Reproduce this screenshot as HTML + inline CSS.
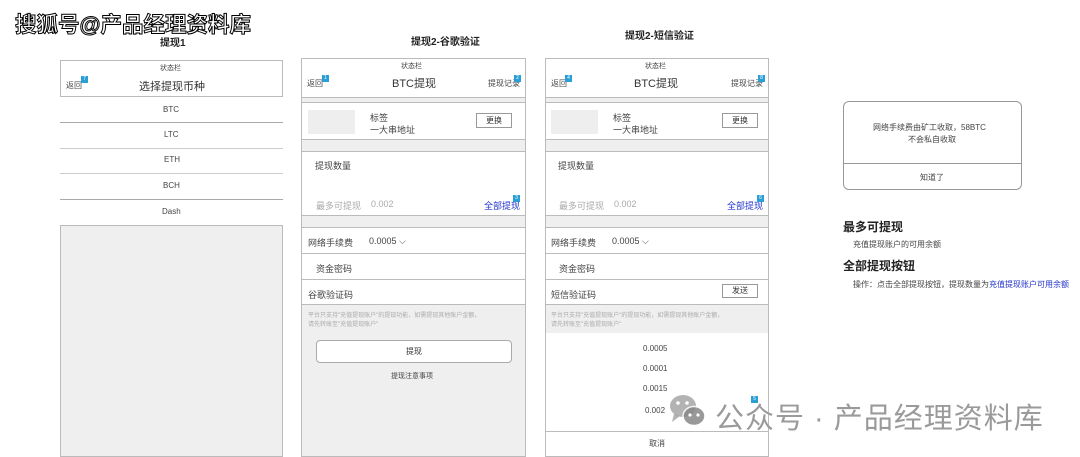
<!DOCTYPE html>
<html><head><meta charset="utf-8"><style>
*{margin:0;padding:0;box-sizing:border-box}
body{width:1080px;height:457px;background:#fff;position:relative;overflow:hidden;font-family:"Liberation Sans","Noto Sans CJK SC",sans-serif;color:#333}
.a{position:absolute}
.t{font-size:9px;color:#444;white-space:nowrap}
.g{background:#efefef}
.bd{border:1px solid #bbb}
.hl{position:absolute;height:1px;background:#aaa}
.bdg{position:absolute;width:7px;height:7px;background:#2a9fd6;color:#fff;font-size:5px;line-height:7px;text-align:center}
.ttl{position:absolute;font-size:10px;font-weight:bold;color:#222;white-space:nowrap}
</style></head><body>

<div class="a" style="left:15px;top:8px;font-size:21.5px;font-weight:bold;color:#fff;-webkit-text-stroke:1px #000;white-space:nowrap">搜狐号@产品经理资料库</div>

<div class="ttl" style="left:160px;top:34px">提现1</div>
<div class="ttl" style="left:411px;top:33px">提现2-谷歌验证</div>
<div class="ttl" style="left:625px;top:27px">提现2-短信验证</div>

<!-- Panel 1 -->
<div class="a bd" style="left:60px;top:60px;width:223px;height:37px"></div>
<div class="a t" style="left:160px;top:63px;font-size:7px">状态栏</div>
<div class="a t" style="left:66px;top:80px;font-size:8px">返回</div>
<div class="bdg" style="left:81px;top:76px">7</div>
<div class="a t" style="left:139px;top:78px;font-size:11px;color:#333">选择提现币种</div>
<div class="a t" style="left:163px;top:105px;font-size:8px">BTC</div>
<div class="hl" style="left:60px;top:122px;width:223px"></div>
<div class="a t" style="left:164px;top:130px;font-size:8px">LTC</div>
<div class="hl" style="left:60px;top:148px;width:223px;background:#ccc"></div>
<div class="a t" style="left:164px;top:155px;font-size:8px">ETH</div>
<div class="hl" style="left:60px;top:173px;width:223px;background:#ccc"></div>
<div class="a t" style="left:163px;top:181px;font-size:8px">BCH</div>
<div class="hl" style="left:60px;top:199px;width:223px"></div>
<div class="a t" style="left:162px;top:207px;font-size:8px">Dash</div>
<div class="a bd g" style="left:60px;top:225px;width:223px;height:232px"></div>

<!-- Panel 2 -->
<div class="a bd" style="left:301px;top:58px;width:225px;height:399px;background:#fff"></div>
<div class="a t" style="left:401px;top:61px;font-size:7px">状态栏</div>
<div class="a t" style="left:307px;top:78px;font-size:8px">返回</div>
<div class="bdg" style="left:322px;top:75px">1</div>
<div class="a t" style="left:392px;top:75px;font-size:11px;color:#333">BTC提现</div>
<div class="a t" style="left:488px;top:78px;font-size:8px">提现记录</div>
<div class="bdg" style="left:514px;top:75px">2</div>
<div class="a g" style="left:302px;top:97px;width:223px;height:6px;border-top:1px solid #bbb;border-bottom:1px solid #bbb"></div>
<div class="a" style="left:308px;top:110px;width:47px;height:24px;background:#eee"></div>
<div class="a t" style="left:370px;top:111px">标签</div>
<div class="a t" style="left:370px;top:123px">一大串地址</div>
<div class="a" style="left:476px;top:113px;width:36px;height:15px;border:1px solid #999;font-size:8px;text-align:center;line-height:13px">更换</div>
<div class="a g" style="left:302px;top:139px;width:223px;height:13px;border-top:1px solid #bbb;border-bottom:1px solid #bbb"></div>
<div class="a t" style="left:315px;top:159px">提现数量</div>
<div class="a t" style="left:316px;top:199px;color:#aaa">最多可提现</div>
<div class="a t" style="left:371px;top:199px;color:#aaa">0.002</div>
<div class="a t" style="left:484px;top:199px;color:#2233cc">全部提现</div>
<div class="bdg" style="left:513px;top:195px">3</div>
<div class="a g" style="left:302px;top:215px;width:223px;height:13px;border-top:1px solid #bbb;border-bottom:1px solid #bbb"></div>
<div class="a t" style="left:308px;top:236px">网络手续费</div>
<div class="a t" style="left:369px;top:236px">0.0005 ⌵</div>
<div class="hl" style="left:302px;top:253px;width:223px;background:#bbb"></div>
<div class="a t" style="left:316px;top:262px">资金密码</div>
<div class="hl" style="left:302px;top:279px;width:223px;background:#bbb"></div>
<div class="a t" style="left:308px;top:288px">谷歌验证码</div>
<div class="a g" style="left:302px;top:304px;width:223px;height:152px;border-top:1px solid #bbb"></div>
<div class="a t" style="left:308px;top:312px;font-size:6px;color:#aaa;line-height:9px">平台只支持"充值提现账户"的提现功能，如需提现其他账户金额，<br>请先转账至"充值提现账户"</div>
<div class="a" style="left:316px;top:340px;width:196px;height:23px;background:#fff;border:1px solid #aaa;border-radius:4px;font-size:8px;text-align:center;line-height:21px">提现</div>
<div class="a t" style="left:391px;top:371px;font-size:7px">提现注意事项</div>

<!-- Panel 3 -->
<div class="a bd" style="left:545px;top:58px;width:224px;height:399px;background:#fff"></div>
<div class="a t" style="left:645px;top:61px;font-size:7px">状态栏</div>
<div class="a t" style="left:551px;top:78px;font-size:8px">返回</div>
<div class="bdg" style="left:565px;top:75px">4</div>
<div class="a t" style="left:634px;top:75px;font-size:11px;color:#333">BTC提现</div>
<div class="a t" style="left:731px;top:78px;font-size:8px">提现记录</div>
<div class="bdg" style="left:758px;top:75px">8</div>
<div class="a g" style="left:546px;top:97px;width:222px;height:6px;border-top:1px solid #bbb;border-bottom:1px solid #bbb"></div>
<div class="a" style="left:551px;top:110px;width:47px;height:24px;background:#eee"></div>
<div class="a t" style="left:613px;top:111px">标签</div>
<div class="a t" style="left:613px;top:123px">一大串地址</div>
<div class="a" style="left:722px;top:113px;width:36px;height:15px;border:1px solid #999;font-size:8px;text-align:center;line-height:13px">更换</div>
<div class="a g" style="left:546px;top:139px;width:222px;height:13px;border-top:1px solid #bbb;border-bottom:1px solid #bbb"></div>
<div class="a t" style="left:558px;top:159px">提现数量</div>
<div class="a t" style="left:559px;top:199px;color:#aaa">最多可提现</div>
<div class="a t" style="left:614px;top:199px;color:#aaa">0.002</div>
<div class="a t" style="left:727px;top:199px;color:#2233cc">全部提现</div>
<div class="bdg" style="left:757px;top:195px">6</div>
<div class="a g" style="left:546px;top:215px;width:222px;height:13px;border-top:1px solid #bbb;border-bottom:1px solid #bbb"></div>
<div class="a t" style="left:551px;top:236px">网络手续费</div>
<div class="a t" style="left:612px;top:236px">0.0005 ⌵</div>
<div class="hl" style="left:546px;top:253px;width:222px;background:#bbb"></div>
<div class="a t" style="left:559px;top:262px">资金密码</div>
<div class="hl" style="left:546px;top:279px;width:222px;background:#bbb"></div>
<div class="a t" style="left:551px;top:288px">短信验证码</div>
<div class="a" style="left:722px;top:284px;width:36px;height:14px;border:1px solid #999;font-size:8px;text-align:center;line-height:12px">发送</div>
<div class="a g" style="left:546px;top:304px;width:222px;height:29px;border-top:1px solid #bbb"></div>
<div class="a t" style="left:551px;top:312px;font-size:6px;color:#aaa;line-height:9px">平台只支持"充值提现账户"的提现功能，如需提现其他账户金额，<br>请先转账至"充值提现账户"</div>
<div class="a t" style="left:643px;top:344px;font-size:8px">0.0005</div>
<div class="a t" style="left:643px;top:364px;font-size:8px">0.0001</div>
<div class="a t" style="left:643px;top:384px;font-size:8px">0.0015</div>
<div class="a t" style="left:645px;top:406px;font-size:8px">0.002</div>
<div class="bdg" style="left:751px;top:396px">5</div>
<div class="hl" style="left:546px;top:431px;width:222px;background:#bbb"></div>
<div class="a t" style="left:649px;top:438px;font-size:8px">取消</div>

<!-- dialog -->
<div class="a" style="left:843px;top:101px;width:179px;height:89px;border:1px solid #999;border-radius:6px"></div>
<div class="a t" style="left:873px;top:122px;font-size:8px">网络手续费由矿工收取，58BTC</div>
<div class="a t" style="left:908px;top:134px;font-size:8px">不会私自收取</div>
<div class="hl" style="left:843px;top:163px;width:179px;background:#999"></div>
<div class="a t" style="left:920px;top:172px;font-size:8px">知道了</div>

<div class="a" style="left:843px;top:218px;font-size:12px;font-weight:bold;color:#222;white-space:nowrap">最多可提现</div>
<div class="a t" style="left:853px;top:239px;font-size:8px">充值提现账户的可用余额</div>
<div class="a" style="left:843px;top:257px;font-size:12px;font-weight:bold;color:#222;white-space:nowrap">全部提现按钮</div>
<div class="a t" style="left:853px;top:279px;font-size:8px">操作：点击全部提现按钮，提现数量为<span style="color:#2233cc">充值提现账户可用余额</span></div>

<svg class="a" style="left:668px;top:392px" width="42" height="38" viewBox="0 0 42 38">
<ellipse cx="15" cy="14" rx="13" ry="11" fill="#999" opacity=".75"/>
<path d="M6 22 L4 30 L12 24Z" fill="#999" opacity=".75"/>
<ellipse cx="26" cy="24" rx="11" ry="9.5" fill="#888" opacity=".85" stroke="#fff" stroke-width="1.5"/>
<circle cx="10" cy="11" r="1.8" fill="#fff"/><circle cx="19" cy="11" r="1.8" fill="#fff"/>
<circle cx="22" cy="23" r="1.6" fill="#fff"/><circle cx="30" cy="23" r="1.6" fill="#fff"/>
</svg>
<div class="a" style="left:715px;top:395px;font-size:29px;color:#9a9a9a;white-space:nowrap;letter-spacing:1px">公众号 · 产品经理资料库</div>
</body></html>
